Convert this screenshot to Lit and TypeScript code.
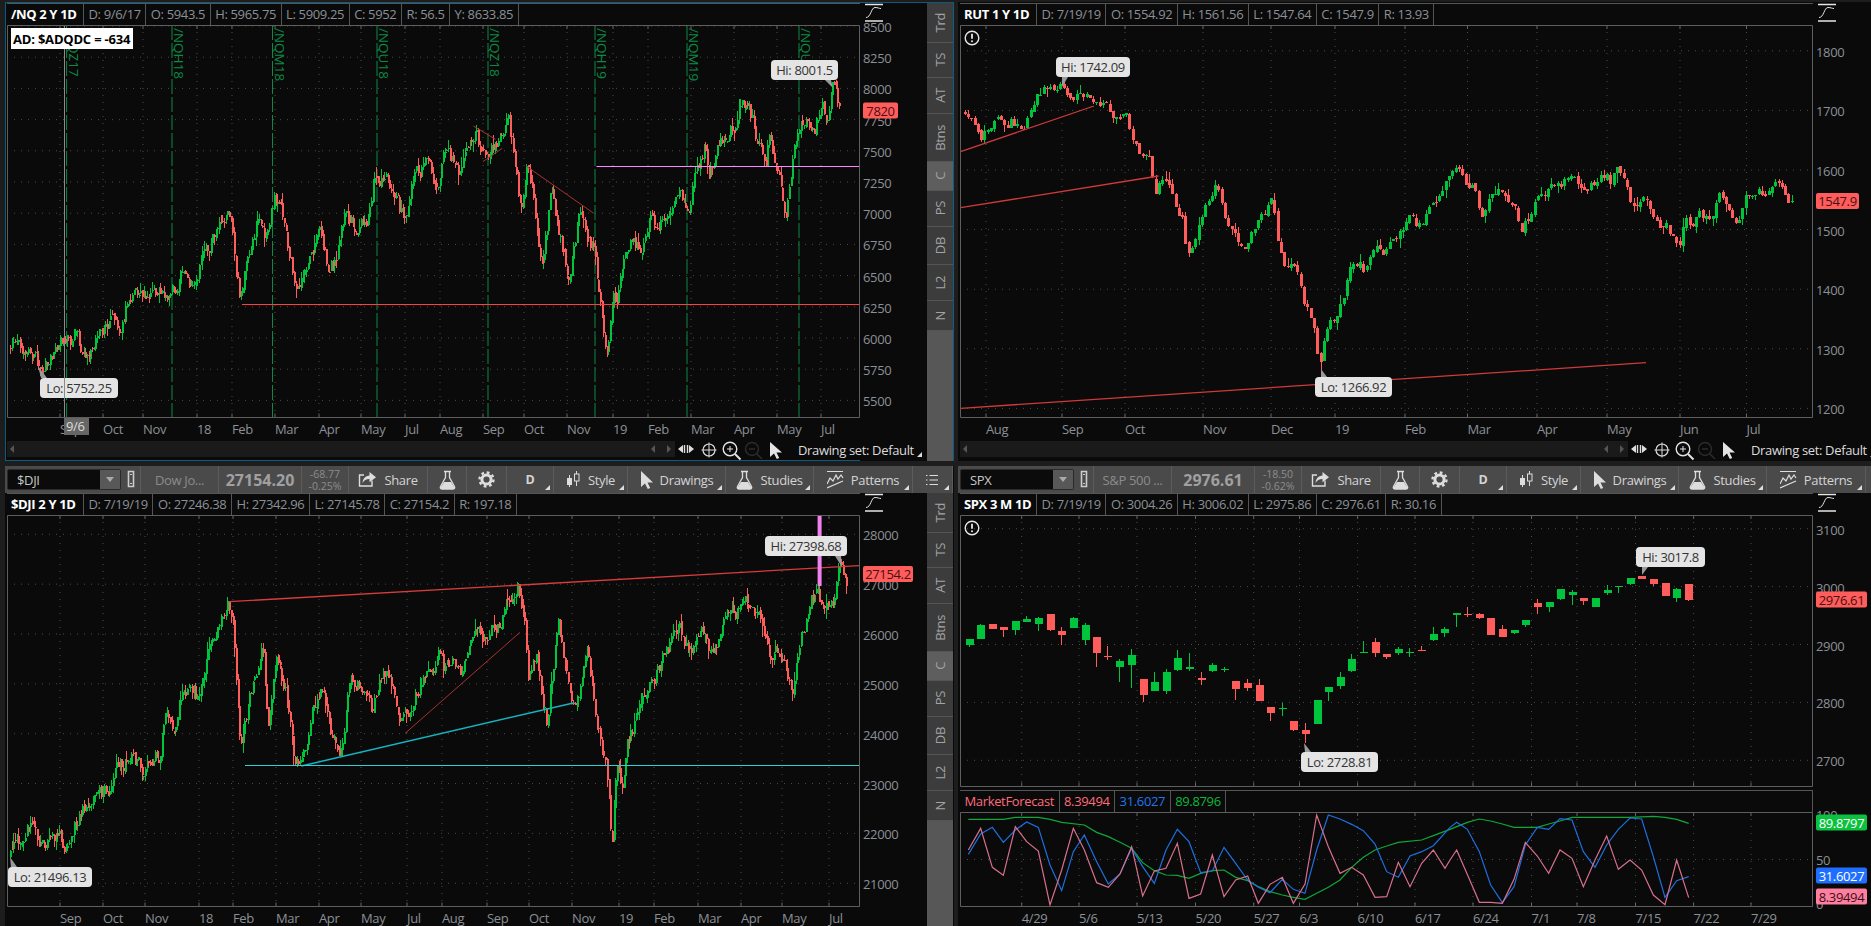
import {LitElement, html, svg, css, nothing, unsafeCSS} from "lit";

const UP = "#00c43c";
const DOWN = "#ff5c5c";
const FONT = unsafeCSS("'Open Sans', 'Noto Sans', sans-serif");

type Pt = [number, number];

// reference points were read off 3x crops, so each chart has its own x scale
const toPage = (raw: number[][], sx: number, ox: number, oy: number): Pt[] =>
  raw.map(([x, y]) => [x / sx + ox, y / 3 + oy] as Pt);

const NQ_RAW = [[18,985],[30,975],[45,990],[60,1000],[70,1040],[90,1020],[105,960],[125,955],[140,965],[155,1000],[178,935],[205,910],[218,940],[225,870],[248,830],[262,855],[285,800],[300,860],[318,800],[330,755],[352,800],[362,720],[385,650],[407,570],[418,610],[425,740],[432,850],[445,700],[465,585],[475,660],[495,520],[510,590],[525,730],[538,820],[555,730],[575,640],[590,740],[605,700],[622,595],[645,620],[660,590],[672,500],[690,465],[705,480],[722,580],[735,560],[745,470],[775,410],[785,505],[800,400],[825,450],[845,395],[855,320],[868,420],[885,370],[900,350],[915,315],[925,395],[938,580],[948,440],[960,520],[975,730],[995,500],[1005,640],[1025,780],[1045,560],[1055,650],[1070,680],[1090,980],[1095,1015],[1105,810],[1110,890],[1120,730],[1140,660],[1158,710],[1170,590],[1182,630],[1200,560],[1225,520],[1240,550],[1250,470],[1268,385],[1278,460],[1295,360],[1320,330],[1335,260],[1350,260],[1368,380],[1378,460],[1385,350],[1400,460],[1416,590],[1430,390],[1452,285],[1465,345],[1480,250],[1490,290],[1500,215],[1512,270]];

const RUT_RAW = [[25,275],[40,285],[50,350],[65,325],[85,295],[105,295],[122,325],[140,245],[165,215],[190,205],[205,245],[240,240],[248,260],[265,240],[285,285],[300,280],[308,350],[325,410],[340,415],[348,550],[365,460],[378,530],[398,600],[402,680],[415,680],[425,610],[440,540],[455,485],[470,590],[487,630],[505,680],[525,620],[550,545],[555,650],[565,730],[585,730],[600,830],[612,900],[625,1000],[632,1045],[640,935],[660,890],[668,840],[682,760],[690,735],[705,750],[725,665],[738,715],[765,660],[785,600],[805,620],[825,560],[835,505],[860,470],[880,490],[895,510],[905,590],[915,545],[945,520],[965,555],[970,620],[990,570],[1005,530],[1025,490],[1065,480],[1080,520],[1115,460],[1125,490],[1135,430],[1150,500],[1165,585],[1180,530],[1200,580],[1215,610],[1230,640],[1242,695],[1250,620],[1275,590],[1300,580],[1310,530],[1325,545],[1340,595],[1355,510],[1375,500],[1410,510],[1425,540],[1433,545]];

const DJI_RAW = [[18,1040],[30,1000],[52,950],[65,990],[80,1020],[105,985],[122,1005],[128,950],[148,910],[160,925],[175,870],[200,830],[215,760],[235,745],[262,775],[285,735],[297,630],[312,650],[330,550],[355,560],[368,480],[385,375],[410,285],[420,350],[428,560],[432,700],[440,640],[460,480],[472,410],[482,630],[498,460],[518,570],[530,740],[547,720],[560,620],[580,550],[600,690],[612,720],[630,530],[650,520],[668,620],[690,465],[705,530],[722,640],[735,625],[755,530],[790,440],[800,490],[815,430],[828,500],[845,400],[860,355],[880,400],[900,340],[912,260],[925,290],[932,240],[945,340],[950,530],[965,440],[985,640],[1005,340],[1020,470],[1035,620],[1058,380],[1068,560],[1080,680],[1092,780],[1102,1005],[1110,780],[1120,830],[1130,690],[1150,620],[1160,560],[1170,540],[1190,460],[1205,400],[1222,350],[1245,430],[1270,370],[1285,450],[1300,340],[1330,300],[1355,275],[1375,370],[1388,480],[1398,385],[1420,490],[1427,560],[1440,400],[1450,340],[1468,240],[1482,290],[1500,270],[1512,170],[1525,205]];

// x, bodyTop, bodyBottom, wickTop, wickBottom, up
const SPX_RAW: [number, number, number, number, number, number][] = [
  [32,388,407,388,410,1],[51,345,386,341,388,1],[71,342,356,342,356,0],[90,351,359,351,382,0],[110,334,360,334,374,1],[130,327,335,317,335,1],[149,324,342,320,362,1],[170,313,362,313,362,0],[189,364,375,350,404,0],[209,324,353,320,353,1],[230,345,389,340,406,1],[248,382,431,382,470,0],[268,438,441,407,450,0],[288,454,473,446,516,1],[308,436,467,418,533,1],[328,508,557,508,575,0],[347,517,543,485,543,1],[368,487,543,477,551,1],[387,445,482,419,482,1],[407,472,477,428,484,1],[427,505,510,485,524,0],[446,466,485,458,485,1],[466,478,480,472,486,1],[485,514,539,514,570,0],[505,520,534,506,542,0],[526,526,573,506,573,0],[545,591,608,591,634,0],[565,595,599,578,618,1],[584,634,662,634,662,0],[604,661,674,640,700,0],[625,570,641,570,641,1],[644,531,545,531,574,1],[664,502,528,487,538,1],[683,448,485,432,485,1],[703,427,428,394,430,1],[723,396,428,385,440,0],[742,432,441,432,448,0],[763,418,429,412,434,1],[782,427,428,413,440,1],[802,421,423,408,424,0],[822,373,392,350,392,1],[841,358,370,350,382,1],[861,310,317,310,350,1],[880,313,317,292,322,0],[900,313,326,308,326,0],[920,324,375,324,375,0],[940,357,381,346,381,0],[960,361,371,361,371,1],[979,331,347,331,352,1],[999,280,293,268,312,0],[1019,277,293,277,307,1],[1039,238,269,238,269,1],[1059,247,257,240,286,1],[1078,264,273,264,284,0],[1098,264,290,264,292,1],[1118,240,248,226,256,1],[1137,229,232,229,250,1],[1158,205,224,205,224,1],[1177,199,207,199,207,0],[1197,208,224,208,228,0],[1217,220,258,220,258,0],[1236,238,266,234,277,1],[1257,223,272,223,272,0],
];

const PINK_A = [[55,240],[92,175],[127,292],[160,316],[196,170],[230,215],[265,243],[300,405],[335,300],[370,175],[403,240],[440,338],[475,352],[510,312],[545,230],[578,378],[613,303],[648,295],[682,220],[717,385],[752,372],[787,255],[822,380],[857,330],[893,318],[925,400],[960,343],[997,322],[1030,400],[1065,342],[1100,135],[1135,230],[1170,310],[1205,292],[1240,315],[1275,382],[1310,380],[1345,277],[1380,350],[1415,280],[1450,240],[1485,295],[1500,270]];
const PINK_B = [[20,240],[55,320],[88,397],[122,397],[157,400],[192,328],[226,217],[262,258],[296,310],[330,240],[366,265],[400,350],[435,270],[470,198],[505,298],[540,270],[575,300],[610,375],[645,404],[680,270],[716,383]];
const BLUE_A = [[55,253],[92,192],[127,172],[160,217],[196,180],[230,156],[265,172],[300,285],[335,362],[370,245],[403,195],[440,275],[475,342],[510,312],[545,235],[578,290],[613,340],[648,240],[682,178],[717,215],[752,308],[787,303],[822,232],[857,280],[893,330],[925,352],[960,368],[997,328],[1030,358],[1065,370],[1100,240],[1135,135],[1170,147],[1205,163],[1240,182],[1275,222],[1310,305],[1345,322],[1380,258],[1415,245],[1450,227],[1500,172]];
const BLUE_B = [[20,157],[52,178],[88,245],[122,345],[157,398],[192,350],[226,225],[262,172],[296,178],[330,146],[366,150],[400,245],[435,292],[470,225],[505,178],[540,144],[575,147],[610,260],[645,382],[680,332],[716,320]];
const GREEN_A = [[55,148],[160,148],[196,142],[265,142],[300,148],[335,157],[403,165],[440,187],[475,200],[510,217],[545,235],[578,278],[613,302],[648,315],[682,316],[717,325],[752,310],[787,302],[822,300],[857,322],[893,332],[925,350],[960,365],[997,375],[1030,382],[1065,388],[1100,370],[1135,352],[1170,330],[1205,292],[1240,262],[1275,240],[1310,228],[1345,217],[1415,210],[1450,197],[1500,178]];
const GREEN_B = [[52,157],[88,147],[122,153],[157,162],[192,172],[262,172],[296,162],[330,153],[366,142],[540,142],[610,139],[645,142],[680,148],[716,160]];

const study = (a: number[][], b: number[][]) =>
  [...toPage(a, 3, 950, 770), ...toPage(b, 3, 1450, 770)];

function rng(seed: number) {
  return () => {
    seed = (seed + 0x6d2b79f5) | 0;
    let t = Math.imul(seed ^ (seed >>> 15), 1 | seed);
    t = (t + Math.imul(t ^ (t >>> 7), 61 | t)) ^ t;
    return ((t ^ (t >>> 14)) >>> 0) / 4294967296;
  };
}

function along(pts: Pt[], x: number) {
  for (let i = 1; i < pts.length; i++) {
    if (x <= pts[i][0]) {
      const [x0, y0] = pts[i - 1];
      const [x1, y1] = pts[i];
      return y0 + ((y1 - y0) * (x - x0)) / (x1 - x0);
    }
  }
  return pts[pts.length - 1][1];
}

interface Bar { x: number; top: number; bottom: number; hi: number; lo: number; up: boolean; }

// daily bars follow the traced close, plus a short mean-reverting wobble
function makeBars(pts: Pt[], n: number, seed: number, noise: number, wick: number): Bar[] {
  const r = rng(seed);
  const x0 = pts[0][0];
  const x1 = pts[pts.length - 1][0];
  const bars: Bar[] = [];
  let prev = pts[0][1];
  let wobble = 0;
  for (let i = 0; i < n; i++) {
    const x = x0 + ((x1 - x0) * i) / (n - 1);
    wobble = wobble * 0.55 + (r() - 0.5) * noise;
    const close = along(pts, x) + wobble;
    const top = Math.min(prev, close);
    const bottom = Math.max(prev, close);
    bars.push({x, top, bottom, hi: top - r() * r() * wick, lo: bottom + r() * r() * wick, up: close < prev});
    prev = close + (r() - 0.5) * noise * 0.25;
  }
  return bars;
}

const spxBars = (): Bar[] =>
  SPX_RAW.map(([x, t, b, h, l, up]) => ({
    x: x / 1.7025 + 950,
    top: t / 3 + 510,
    bottom: b / 3 + 510,
    hi: h / 3 + 510,
    lo: l / 3 + 510,
    up: up === 1,
  }));

function candlePaths(bars: Bar[], w: number) {
  const build = (list: Bar[]) => {
    let wicks = "";
    let bodies = "";
    for (const b of list) {
      const x = Math.round(b.x);
      wicks += `M${x + 0.5} ${b.hi.toFixed(1)}V${b.lo.toFixed(1)}`;
      const h = Math.max(Math.round(b.bottom - b.top), 1);
      bodies += `M${x - Math.floor((w - 1) / 2)} ${Math.round(b.top)}h${w}v${h}h${-w}z`;
    }
    return {wicks, bodies};
  };
  const up = build(bars.filter((b) => b.up));
  const down = build(bars.filter((b) => !b.up));
  return svg`<g shape-rendering="crispEdges">
    <path d=${up.wicks} stroke=${UP} fill="none"/>
    <path d=${up.bodies} fill=${UP}/>
    <path d=${down.wicks} stroke=${DOWN} fill="none"/>
    <path d=${down.bodies} fill=${DOWN}/>
  </g>`;
}

const bubble = (x: number, y: number, w: number, text: string, tx: number, ty: number, bx: number) => {
  const edge = ty < y ? y : y + 20;
  return svg`
    <polygon points="${tx},${ty} ${bx - 3},${edge} ${bx + 3},${edge}" fill="#9a9a9a"/>
    <rect x=${x} y=${y} width=${w} height="20" rx="4" fill="#e4e4e4"/>
    <text x=${x + w / 2} y=${y + 10} class="bub">${text}</text>`;
};

const trend = (x1: number, y1: number, x2: number, y2: number, color: string, w = 1) =>
  svg`<line x1=${x1} y1=${y1} x2=${x2} y2=${y2} stroke=${color} stroke-width=${w}/>`;

const polyline = (pts: Pt[], color: string) =>
  svg`<polyline points=${pts.map((p) => p.join(",")).join(" ")} fill="none" stroke=${color} stroke-width="1.2"/>`;

// overlay lines, given in crop coords like the price traces
const zl = (sx: number, ox: number, oy: number, a: number, b: number, c: number, d: number, color: string, w = 1) =>
  trend(a / sx + ox, b / 3 + oy, c / sx + ox, d / 3 + oy, color, w);

const NQ_ROLLS: [number, string][] = [[66.6, "/NQZ17"], [172, "/NQH18"], [272.5, "/NQM18"], [377, "/NQU18"], [488, "/NQZ18"], [595, "/NQH19"], [687, "/NQM19"], [799, "/NQU19"]];

const nqUnder = () => svg`
  ${NQ_ROLLS.map(([x, label]) => svg`
    <line x1=${x} y1="25" x2=${x} y2="417" stroke="#0b8a45" stroke-dasharray="15 3"/>
    <text transform="translate(${x + 2},28) rotate(90)" class="roll">${label}</text>`)}`;

const nqOver = () => svg`
  ${zl(1.802, 0, 20, 853, 318, 893, 358, "#a83232")}
  ${zl(1.802, 0, 20, 870, 425, 905, 385, "#a83232")}
  ${zl(1.802, 0, 20, 948, 438, 1070, 580, "#a83232")}
  <line x1="596.5" y1="166.5" x2="860" y2="166.5" stroke="#ff88ff"/>
  <line x1="242" y1="304.5" x2="860" y2="304.5" stroke="#ff4040"/>
  ${bubble(771, 60, 67, "Hi: 8001.5", 833, 88, 828)}
  ${bubble(40, 378, 78, "Lo: 5752.25", 38, 366, 44)}
  <line x1="64.5" y1="25" x2="64.5" y2="417" stroke="#8a8a8a"/>
  <rect x="11" y="28" width="122" height="21" fill="#fff"/>
  <text x="13" y="38.5" class="ad">AD: $ADQDC = -634</text>`;

const rutOver = () => svg`
  ${zl(1.7025, 950, 20, 18, 395, 245, 258, "#d03a3a", 1.3)}
  ${zl(1.7025, 950, 20, 18, 563, 355, 468, "#d03a3a", 1.3)}
  ${zl(1.7025, 950, 20, 18, 1165, 1185, 1028, "#d03a3a", 1.3)}
  ${bubble(1056, 57, 74, "Hi: 1742.09", 1062, 87, 1065)}
  ${bubble(1315, 377, 77, "Lo: 1266.92", 1321, 369, 1324)}`;

const warnIcon = (x: number, y: number) => svg`
  <circle cx=${x} cy=${y} r="6.8" fill="none" stroke="#e6e6e6" stroke-width="1.4"/>
  <line x1=${x} y1=${y - 4.2} x2=${x} y2=${y + 0.8} stroke="#e6e6e6" stroke-width="1.8"/>
  <circle cx=${x} cy=${y + 3.2} r="1" fill="#e6e6e6"/>`;

const djiOver = () => svg`
  ${zl(1.802, 0, 510, 413, 275, 1548, 167, "#d83c3c", 1.3)}
  ${zl(1.802, 0, 510, 730, 670, 937, 367, "#a83232")}
  ${zl(1.802, 0, 510, 543, 768, 1035, 578, "#17b3c0", 1.5)}
  <line x1="245" y1="765.5" x2="860" y2="765.5" stroke="#2fd0d8"/>
  <line x1="819.6" y1="516" x2="819.6" y2="586" stroke="#ee82ee" stroke-width="4"/>
  ${bubble(765, 536, 82, "Hi: 27398.68", 842, 567, 838)}
  ${bubble(8, 867, 84, "Lo: 21496.13", 10, 857, 14)}`;

const spxOver = () => svg`
  ${bubble(1636, 547, 69, "Hi: 3017.8", 1642, 575, 1645)}
  ${bubble(1301, 752, 77, "Lo: 2728.81", 1304, 743, 1308)}`;

interface Tag { y: number; text: string; bg: string; fg: string; w: number; }

interface Chart {
  x: number;
  top: number;
  plotH: number;
  labelsH: number;
  axisTop: number;
  axisH: number;
  tags: Tag[];
  title: string;
  cells: string[];
  hLines: Pt[];
  ticks: number[];
  xLabels: string[];
  bars: Bar[];
  bodyW: number;
  under?: () => unknown;
  over: () => unknown;
  warn?: boolean;
  scroll: boolean;
  active: boolean;
  toolbar?: {sym: string; name: string; price: string; chg: string; pct: string};
  study?: boolean;
}

const CHARTS: Record<string, Chart> = {
  nq: {
    x: 7, top: 25, plotH: 393, labelsH: 23, axisTop: 3, axisH: 458, active: true, scroll: true,
    title: "/NQ 2 Y 1D",
    cells: ["D: 9/6/17", "O: 5943.5", "H: 5965.75", "L: 5909.25", "C: 5952", "R: 56.5", "Y: 8633.85"],
    hLines: [8500, 8250, 8000, 7750, 7500, 7250, 7000, 6750, 6500, 6250, 6000, 5750, 5500].map((v, i) => [v, 26 + i * 31.2] as Pt),
    ticks: [60, 103, 143, 197, 232, 275, 319, 361, 405, 440, 483, 524, 567, 613, 648, 691, 734, 777, 821],
    xLabels: ["Sep", "Oct", "Nov", "18", "Feb", "Mar", "Apr", "May", "Jul", "Aug", "Sep", "Oct", "Nov", "19", "Feb", "Mar", "Apr", "May", "Jul"],
    bars: makeBars(toPage(NQ_RAW, 1.802, 0, 20), 497, 11, 15, 11),
    bodyW: 2,
    under: nqUnder, over: nqOver,
    tags: [{y: 110.5, text: "7820", bg: DOWN, fg: "#4a0f0f", w: 35}],
  },
  rut: {
    x: 960, top: 25, plotH: 393, labelsH: 23, axisTop: 3, axisH: 458, active: false, scroll: true, warn: true,
    title: "RUT 1 Y 1D",
    cells: ["D: 7/19/19", "O: 1554.92", "H: 1561.56", "L: 1547.64", "C: 1547.9", "R: 13.93"],
    hLines: [1800, 1700, 1600, 1500, 1400, 1300, 1200].map((v, i) => [v, 50.8 + i * 59.6] as Pt),
    ticks: [986, 1062, 1125, 1203, 1271, 1335, 1405, 1467.5, 1537, 1607, 1680, 1746.5],
    xLabels: ["Aug", "Sep", "Oct", "Nov", "Dec", "19", "Feb", "Mar", "Apr", "May", "Jun", "Jul"],
    bars: makeBars(toPage(RUT_RAW, 1.7025, 950, 20), 252, 5, 13, 10),
    bodyW: 3,
    over: rutOver,
    tags: [{y: 201, text: "1547.9", bg: DOWN, fg: "#4a0f0f", w: 43}],
  },
  dji: {
    x: 7, top: 515, plotH: 392, labelsH: 19, axisTop: 493, axisH: 433, active: false, scroll: false,
    toolbar: {sym: "$DJI", name: "Dow Jo...", price: "27154.20", chg: "-68.77", pct: "-0.25%"},
    title: "$DJI 2 Y 1D",
    cells: ["D: 7/19/19", "O: 27246.38", "H: 27342.96", "L: 27145.78", "C: 27154.2", "R: 197.18"],
    hLines: [28000, 27000, 26000, 25000, 24000, 23000, 22000, 21000].map((v, i) => [v, 534.3 + i * 49.85] as Pt),
    ticks: [60, 103, 145, 199, 233, 276, 319, 361, 407, 442, 487, 529, 572, 619, 654, 698, 741, 782, 829],
    xLabels: ["Sep", "Oct", "Nov", "18", "Feb", "Mar", "Apr", "May", "Jul", "Aug", "Sep", "Oct", "Nov", "19", "Feb", "Mar", "Apr", "May", "Jul"],
    bars: makeBars(toPage(DJI_RAW, 1.802, 0, 510), 497, 23, 15, 11),
    bodyW: 2,
    over: djiOver,
    tags: [{y: 574, text: "27154.2", bg: DOWN, fg: "#4a0f0f", w: 50}],
  },
  spx: {
    x: 960, top: 515, plotH: 272, labelsH: 19, axisTop: 493, axisH: 433, active: false, scroll: false, warn: true, study: true,
    toolbar: {sym: "SPX", name: "S&P 500 ...", price: "2976.61", chg: "-18.50", pct: "-0.62%"},
    title: "SPX 3 M 1D",
    cells: ["D: 7/19/19", "O: 3004.26", "H: 3006.02", "L: 2975.86", "C: 2976.61", "R: 30.16"],
    hLines: [3100, 3000, 2900, 2800, 2700].map((v, i) => [v, 528.7 + i * 57.9] as Pt),
    ticks: [1021.7, 1079, 1137, 1195.5, 1253.7, 1299.5, 1357.6, 1415, 1473, 1531.5, 1577, 1635.5, 1693.6, 1751],
    xLabels: ["4/29", "5/6", "5/13", "5/20", "5/27", "6/3", "6/10", "6/17", "6/24", "7/1", "7/8", "7/15", "7/22", "7/29"],
    bars: spxBars(),
    bodyW: 8,
    over: spxOver,
    tags: [
      {y: 599.5, text: "2976.61", bg: DOWN, fg: "#4a0f0f", w: 51},
      {y: 822.5, text: "89.8797", bg: "#0bc23e", fg: "#fff", w: 51},
      {y: 875.5, text: "31.6027", bg: "#1e6fff", fg: "#fff", w: 51},
      {y: 896.5, text: "8.39494", bg: "#ff7f9f", fg: "#3a1018", w: 51},
    ],
  },
};

const TAB_LIST: [string, string][] = [["Trd", "t40"], ["TS", "t35"], ["AT", "t36"], ["Btns", "t48"], ["C", "t29 on"], ["PS", "t36"], ["DB", "t38"], ["L2", "t36"], ["N", "t30"]];

const flask = html`<svg width="17" height="20" viewBox="0 0 17 20">
  <path d="M5 1.5h7M6.5 1.5v6L1.5 16.5c-.6 1.2 0 2.5 1.3 2.5h11.4c1.3 0 1.9-1.3 1.3-2.5L10.5 7.5v-6" fill="none" stroke="#ddd" stroke-width="1.3"/>
  <path d="M5 12h7l3.5 5.5c.3.8-.2 1.5-1 1.5H2.5c-.8 0-1.3-.7-1-1.5z" fill="#ddd"/></svg>`;

const gear = html`<svg width="17" height="17" viewBox="0 0 17 17">
  <circle cx="8.5" cy="8.5" r="4.6" fill="none" stroke="#ddd" stroke-width="3"/>
  <circle cx="8.5" cy="8.5" r="7" fill="none" stroke="#ddd" stroke-width="2.4" stroke-dasharray="2.75 2.75"/></svg>`;

const share = html`<svg width="19" height="17" viewBox="0 0 19 17">
  <path d="M14 9.5V15H1.5V4H6" fill="none" stroke="#ddd" stroke-width="1.4"/>
  <path d="M11.5 1L18 6.2l-6.5 5V8C8 8 6 9.3 4.5 12 4.8 7.5 7.5 4.6 11.5 4.4z" fill="#ddd"/></svg>`;

const candleIcon = html`<svg width="15" height="19" viewBox="0 0 15 19">
  <path d="M3.5 5v12M10.5 1v15" stroke="#ddd" fill="none"/>
  <rect x="1" y="8" width="5" height="7" fill="#ddd"/>
  <rect x="8.5" y="4" width="4.5" height="7" fill="#4a4a4a" stroke="#ddd"/></svg>`;

const cursor = html`<svg width="13" height="18" viewBox="0 0 13 18">
  <path d="M1 0v16l4-3.6L7.8 18l2.4-1.1-2.7-5.4H13z" fill="#ddd"/></svg>`;

const patterns = html`<svg width="17" height="19" viewBox="0 0 17 19">
  <path d="M0 1.5h16M0 14l3-6 3 3 3-6 2 4 3-4 2 3M0 18L16 11" fill="none" stroke="#ddd" stroke-width="1.2"/></svg>`;

const listIcon = html`<svg width="13" height="12" viewBox="0 0 13 12">
  <path d="M0 1.5h1.5M3.5 1.5H12M0 6h1.5M3.5 6H12M0 10.5h1.5M3.5 10.5H12" stroke="#ddd" fill="none"/></svg>`;

const linkIcon = html`<svg width="10" height="19" viewBox="0 0 10 19">
  <path d="M2.5 1.5h5v15h-5z" fill="none" stroke="#ccc" stroke-width="1.6"/>
  <path d="M4 4.5h2M4 13.5h2" stroke="#ccc"/></svg>`;

const navIcons = html`<svg class="nav" width="106" height="20" viewBox="678 441 106 20">
  <path d="M678 449l5-4v8zM694 449l-5-4v8z" fill="#ddd"/>
  <path d="M684.5 445v8M687.5 445v8" stroke="#ddd" stroke-width="1.4"/>
  <circle cx="709" cy="450" r="6" fill="none" stroke="#ddd" stroke-width="1.2"/>
  <path d="M709 442.5v15M701.5 450h15" stroke="#ddd"/>
  <circle cx="730" cy="449" r="6.8" fill="none" stroke="#e4e4e4" stroke-width="1.4"/>
  <path d="M735 454l5.5 5.5" stroke="#e4e4e4" stroke-width="2"/>
  <path d="M730 446v6M727 449h6" stroke="#e4e4e4"/>
  <circle cx="752" cy="449" r="6.5" fill="none" stroke="#2c2c2c" stroke-width="1.4"/>
  <path d="M757 454l5 5M749 449h6" stroke="#2c2c2c" stroke-width="1.5"/>
  <path d="M770 442v15l4-3.4 2.8 5.4 2.4-1.1-2.7-5.3H782z" fill="#e4e4e4"/>
</svg>`;

class ChartPanel extends LitElement {
  declare chart: Chart;
  static properties = {chart: {attribute: false}};

  static styles = css`
    :host {
      display: block;
      overflow: hidden;
      font-family: ${FONT};
      letter-spacing: -0.35px;
    }
    .panel {
      box-sizing: border-box;
      width: 949px;
      height: 100%;
      background: #0a0a0a;
      padding-left: 1px;
      border: 1px solid transparent;
    }
    .panel.active {
      border-color: #0e5a80;
    }
    .panel.low {
      border: 0;
      padding-left: 2px;
    }
    .toolbar {
      display: flex;
      box-sizing: border-box;
      align-items: center;
      margin-left: -2px;
      padding-left: 2px;
      height: 27px;
      width: 948px;
      background: #4a4a4a;
      color: #d4d4d4;
      font-size: 13px;
    }
    .seg {
      display: flex;
      position: relative;
      box-sizing: border-box;
      flex: none;
      align-items: center;
      justify-content: center;
      gap: 7px;
      height: 27px;
      border-right: 1px solid #5c5c5c;
    }
    .seg.menu::after {
      content: "";
      position: absolute;
      right: 3px;
      bottom: 3px;
      border-style: solid;
      border-width: 0 0 5px 5px;
      border-color: transparent transparent #ddd transparent;
    }
    .sym {
      display: flex;
      box-sizing: border-box;
      flex: none;
      align-items: center;
      justify-content: space-between;
      width: 114px;
      height: 21px;
      margin-right: 1px;
      padding-left: 9px;
      background: #0b0b0b;
      border: 1px solid #2a2a2a;
      border-radius: 2px;
      color: #c8c8c8;
    }
    .drop {
      display: flex;
      align-items: center;
      justify-content: center;
      width: 20px;
      height: 19px;
      background: #585858;
    }
    .drop::before {
      content: "";
      border-style: solid;
      border-width: 5px 4.5px 0 4.5px;
      border-color: #aaa transparent transparent transparent;
    }
    .w19 { width: 19px; border-right: 1px solid #5c5c5c; }
    .w78 { width: 78px; }
    .w83 { width: 83px; }
    .w47 { width: 47px; }
    .w79 { width: 79px; }
    .w39 { width: 39px; }
    .w40 { width: 40px; }
    .w74 { width: 74px; }
    .w98 { width: 98px; }
    .w88 { width: 88px; }
    .w99 { width: 99px; }
    .name {
      color: #8c8c8c;
    }
    .price {
      color: #a0a0a0;
      font-size: 16px;
      font-weight: 700;
      letter-spacing: 0;
    }
    .chg {
      flex-direction: column;
      gap: 0;
      color: #8c8c8c;
      font-size: 10.5px;
      line-height: 12px;
      letter-spacing: 0;
    }
    .d {
      font-weight: 700;
      font-size: 12.5px;
      color: #d4d4d4;
    }
    .body {
      display: flex;
    }
    .main {
      flex: none;
      width: 853px;
    }
    .info {
      display: flex;
      box-sizing: border-box;
      height: 22px;
      border-top: 1px solid #555;
      color: #8b9096;
      font-size: 13px;
      line-height: 20px;
      white-space: nowrap;
    }
    .cell {
      padding: 0 4.5px;
      border-right: 1px solid #555;
      background: #0a0a0a;
    }
    .cell.head {
      box-sizing: border-box;
      width: 77px;
      padding: 0 0 0 4px;
      color: #fff;
      font-weight: 700;
    }
    svg {
      display: block;
    }
    .axis {
      flex: none;
      width: 67px;
    }
    .gap {
      height: 3px;
    }
    .study .pink { color: #ff6b7b; }
    .study .blue { color: #2176f0; }
    .study .lime { color: #0cb83c; }
    .study {
      border-right: 1px solid #555;
      box-sizing: border-box;
      width: 853px;
    }
    .lower {
      display: flex;
      align-items: flex-start;
      height: 20px;
    }
    .track {
      display: flex;
      box-sizing: border-box;
      flex: none;
      align-items: center;
      justify-content: space-between;
      width: 668px;
      height: 16px;
      padding: 0 4px 0 3px;
      background: #1a1a1a;
    }
    .arrow {
      display: flex;
      gap: 12px;
    }
    .tri-l, .tri-r {
      border-style: solid;
      border-width: 4px 0;
      border-color: transparent;
    }
    .tri-l { border-right: 4px solid #555; }
    .tri-r { border-left: 4px solid #555; }
    .nav {
      flex: none;
      margin-left: 3px;
    }
    .set {
      position: relative;
      flex: none;
      margin-left: 14px;
      color: #dcdcdc;
      font-size: 13px;
      line-height: 18px;
      white-space: nowrap;
      padding-right: 8px;
    }
    .set::after {
      content: "";
      position: absolute;
      right: 0;
      bottom: 2px;
      border-style: solid;
      border-width: 0 0 5px 5px;
      border-color: transparent transparent #ddd transparent;
    }
    .tabs {
      display: flex;
      flex: none;
      flex-direction: column;
      width: 26px;
      background: #575757;
    }
    .tab {
      display: flex;
      box-sizing: border-box;
      align-items: center;
      justify-content: center;
      background: #3c3c3c;
      border-bottom: 1px solid #555;
      color: #a4a4a4;
      font-size: 13px;
    }
    .tab.on {
      background: #5e5e5e;
    }
    .tab span {
      writing-mode: vertical-rl;
      transform: rotate(180deg);
    }
    .t40 { height: 40px; }
    .t35 { height: 35px; }
    .t36 { height: 36px; }
    .t48 { height: 48px; }
    .t29 { height: 29px; }
    .t38 { height: 38px; }
    .t30 { height: 30px; }
    text {
      font-family: ${FONT};
      font-size: 13px;
    }
    .bub {
      fill: #333;
      text-anchor: middle;
      dominant-baseline: central;
    }
    .roll {
      fill: #0b8a45;
      font-size: 13.5px;
      letter-spacing: 0;
    }
    .ad {
      fill: #000;
      font-weight: 700;
      letter-spacing: -0.2px;
      dominant-baseline: central;
    }
    .price-label {
      fill: #8b9096;
      dominant-baseline: central;
    }
    .tag-label {
      dominant-baseline: central;
    }
    .date {
      fill: #8b9096;
    }
    .hl {
      fill: #dcdcdc;
    }
  `;

  private toolbar() {
    const t = this.chart.toolbar!;
    return html`<div class="toolbar">
      <div class="sym">${t.sym}<span class="drop"></span></div>
      <div class="seg w19">${linkIcon}</div>
      <div class="seg w78 name">${t.name}</div>
      <div class="seg w83 price">${t.price}</div>
      <div class="seg w47 chg"><span>${t.chg}</span><span>${t.pct}</span></div>
      <div class="seg w79">${share}<span>Share</span></div>
      <div class="seg w39">${flask}</div>
      <div class="seg w40">${gear}</div>
      <div class="seg w47 d menu">D</div>
      <div class="seg w74 menu">${candleIcon}<span>Style</span></div>
      <div class="seg w98 menu">${cursor}<span>Drawings</span></div>
      <div class="seg w88 menu">${flask}<span>Studies</span></div>
      <div class="seg w99 menu">${patterns}<span>Patterns</span></div>
      <div class="seg w40 menu">${listIcon}</div>
    </div>`;
  }

  private plot(top: number, h: number, hLines: number[], content: unknown) {
    const c = this.chart;
    const right = c.x + 852.5;
    const bottom = top + h - 0.5;
    return html`<svg width="853" height=${h} viewBox="${c.x} ${top} 853 ${h}">
      <rect x=${c.x} y=${top} width="853" height=${h} fill="#0a0a0a"/>
      <g stroke="#4c4c4c" stroke-dasharray="1 6">
        ${hLines.map((y) => svg`<line x1=${c.x} y1=${y} x2=${right} y2=${y}/>`)}
        ${c.ticks.map((x) => svg`<line x1=${x} y1=${top} x2=${x} y2=${bottom}/>`)}
      </g>
      <g stroke="#666">
        ${c.ticks.map((x) => svg`<path d="M${x} ${top}v4M${x} ${bottom}v-4" fill="none"/>`)}
      </g>
      ${content}
      <path d="M${c.x + 0.5} ${top + 0.5}H${right}V${bottom}H${c.x + 0.5}z" fill="none" stroke="#5e5e5e"/>
    </svg>`;
  }

  private xLabels(top: number) {
    const c = this.chart;
    const h = c.labelsH;
    return html`<svg width="853" height=${h} viewBox="${c.x} ${top} 853 ${h}">
      ${c.xLabels.map((l, i) => svg`<text x=${c.ticks[i]} y=${top + 16} class="date">${l}</text>`)}
      ${c.active
        ? svg`<rect x="64" y=${top} width="25" height="17" fill="#666"/>
              <text x="66" y=${top + 13} class="hl">9/6</text>`
        : nothing}
    </svg>`;
  }

  private axis() {
    const c = this.chart;
    const ax = c.x + 853;
    const iconY = c.axisTop;
    return html`<svg class="axis" width="67" height=${c.axisH} viewBox="${ax} ${c.axisTop} 67 ${c.axisH}">
      <rect x=${ax} y=${c.axisTop} width="67" height=${c.axisH} fill="#0a0a0a"/>
      <path d="M${ax + 5} ${iconY + 1.5}h18M${ax + 5} ${iconY + 18}h18" stroke="#e6e6e6" stroke-width="1.4" fill="none"/>
      <path d="M${ax + 6} ${iconY + 14.5}c5 0 5-10 9-10 3 0 4 1 6 1" stroke="#e6e6e6" fill="none"/>
      ${c.hLines.map(([v, y]) => svg`<text x=${ax + 3} y=${y + 1} class="price-label">${v}</text>`)}
      ${c.study
        ? svg`<text x=${ax + 3} y="815" class="price-label">100</text>
              <text x=${ax + 3} y="860" class="price-label">50</text>
              <text x=${ax + 3} y="904" class="price-label">0</text>`
        : nothing}
      ${c.tags.map((t) => svg`
        <rect x=${ax + 3} y=${t.y - 8} width=${t.w} height="16" rx="2" fill=${t.bg}/>
        <text x=${ax + 3 + t.w / 2} y=${t.y} text-anchor="middle" class="tag-label" fill=${t.fg}>${t.text}</text>`)}
    </svg>`;
  }

  private studyBlock() {
    const top = 812;
    const lines = svg`
      ${polyline(study(GREEN_A, GREEN_B), "#0fa838")}
      ${polyline(study(BLUE_A, BLUE_B), "#1f6fe0")}
      ${polyline(study(PINK_A, PINK_B), "#d8708c")}`;
    return html`<div class="gap"></div>
      <div class="info study">
        <div class="cell pink">MarketForecast</div>
        <div class="cell pink">8.39494</div>
        <div class="cell blue">31.6027</div>
        <div class="cell lime">89.8796</div>
      </div>
      ${this.plot(top, 95, [859.5], lines)}`;
  }

  render() {
    const c = this.chart;
    const under = c.under ? c.under() : nothing;
    const content = svg`
      ${under}
      ${candlePaths(c.bars, c.bodyW)}
      ${c.over()}
      ${c.warn ? warnIcon(c.x + 12, c.top + 13) : nothing}`;
    return html`<div class="panel ${c.active ? "active" : ""} ${c.toolbar ? "low" : ""}">
      ${c.toolbar ? this.toolbar() : nothing}
      <div class="body">
        <div class="main">
          <div class="info">
            <div class="cell head">${c.title}</div>
            ${c.cells.map((t) => html`<div class="cell">${t}</div>`)}
          </div>
          ${this.plot(c.top, c.plotH, c.hLines.map((p) => p[1]), content)}
          ${c.study ? this.studyBlock() : nothing}
          ${this.xLabels(c.top + c.plotH + (c.study ? 120 : 0))}
          ${c.scroll
            ? html`<div class="lower">
                <div class="track">
                  <span class="tri-l"></span>
                  <span class="arrow"><span class="tri-l"></span><span class="tri-r"></span></span>
                </div>
                ${navIcons}
                <div class="set">Drawing set: Default</div>
              </div>`
            : nothing}
        </div>
        ${this.axis()}
        <div class="tabs">
          ${TAB_LIST.map(([t, k]) => html`<div class="tab ${k}"><span>${t}</span></div>`)}
        </div>
      </div>
    </div>`;
  }
}
customElements.define("chart-panel", ChartPanel);

class AppRoot extends LitElement {
  static styles = css`
    :host {
      display: block;
      width: 1871px;
      height: 926px;
      background: #1d1d1d;
      overflow: hidden;
    }
    .grid {
      display: grid;
      grid-template-columns: 958px 913px;
      grid-template-rows: 466px 460px;
    }
    .top {
      height: 459px;
      margin-top: 2px;
    }
    .bottom {
      height: 460px;
    }
    .left {
      margin-left: 5px;
      width: 949px;
    }
    .right {
      width: 913px;
    }
  `;

  render() {
    return html`<div class="grid">
      <chart-panel class="top left" .chart=${CHARTS.nq}></chart-panel>
      <chart-panel class="top right" .chart=${CHARTS.rut}></chart-panel>
      <chart-panel class="bottom left" .chart=${CHARTS.dji}></chart-panel>
      <chart-panel class="bottom right" .chart=${CHARTS.spx}></chart-panel>
    </div>`;
  }
}
customElements.define("app-root", AppRoot);
